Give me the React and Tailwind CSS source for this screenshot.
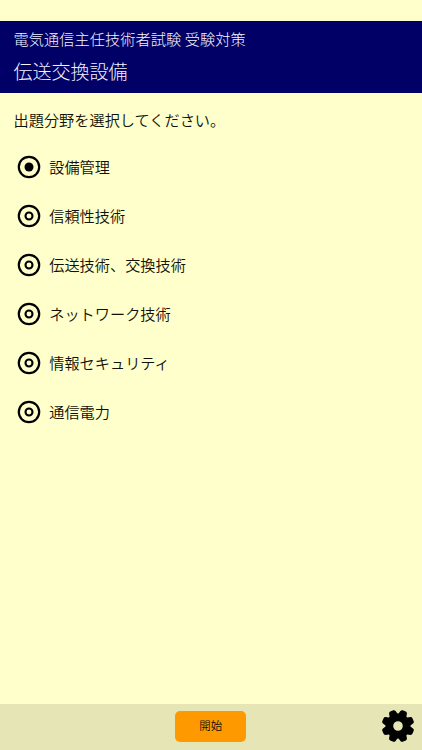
const topics = ['設備管理', '信頼性技術', '伝送技術、交換技術', 'ネットワーク技術', '情報セキュリティ', '通信電力'];

function Radio({ checked }) {
  return (
    <svg viewBox="0 0 24 24" className="h-6 w-6 shrink-0" fill="none" stroke="#000">
      <circle cx="12" cy="12" r="10.2" strokeWidth="2.2" />
      {checked ? <circle cx="12" cy="12" r="4.5" fill="#000" stroke="none" /> : <circle cx="12" cy="12" r="3.5" strokeWidth="2.1" />}
    </svg>
  );
}

function Gear() {
  const teeth = [22.5, 67.5, 112.5, 157.5, 202.5, 247.5, 292.5, 337.5];
  return (
    <svg viewBox="-16 -16 32 32" className="h-8 w-8">
      <circle r="8.6" fill="none" stroke="#000" strokeWidth="7.6" />
      {teeth.map((a) => (
        <path key={a} transform={`rotate(${a})`} d="M-4.5-10.5L-3.5-14.8Q-3-16.3-1.7-16.3H1.7Q3-16.3 3.5-14.8L4.5-10.5Z" />
      ))}
    </svg>
  );
}

export default function App() {
  return (
    <div className="flex h-[750px] w-[422px] flex-col overflow-hidden bg-[#ffffcc] pt-[20.5px] font-['Noto_Sans_CJK_JP',sans-serif] text-[15.2px] font-[350] text-[#111108]">
      <header className="h-[72.5px] shrink-0 bg-[#000066] pl-[13.5px] text-[#f4f4ff]">
        <p className="pt-[6px] leading-[22px] font-light tracking-[0.06px]">電気通信主任技術者試験 受験対策</p>
        <h1 className="mt-[8px] text-[19px] leading-[28px] font-light">伝送交換設備</h1>
      </header>
      <main className="flex-1">
        <p className="mt-[14.5px] pl-[13.5px] leading-[22px]">出題分野を選択してください。</p>
        <div className="mt-[13.5px] flex flex-col">
          {topics.map((topic, i) => (
            <label key={topic} className="flex h-[48.85px] items-center gap-[8.5px] pl-[16.7px]">
              <Radio checked={i === 0} />
              <span className="pb-[2px] leading-[22px]">{topic}</span>
            </label>
          ))}
        </div>
      </main>
      <footer className="grid h-[46px] shrink-0 grid-cols-3 items-center bg-[#e5e5b5] pr-2 pb-[2px]">
        <span />
        <button className="ml-[7.5px] h-[31px] w-[71px] justify-self-center rounded-[5px] bg-[#ff9900] text-[11.4px]">開始</button>
        <button className="justify-self-end"><Gear /></button>
      </footer>
    </div>
  );
}
